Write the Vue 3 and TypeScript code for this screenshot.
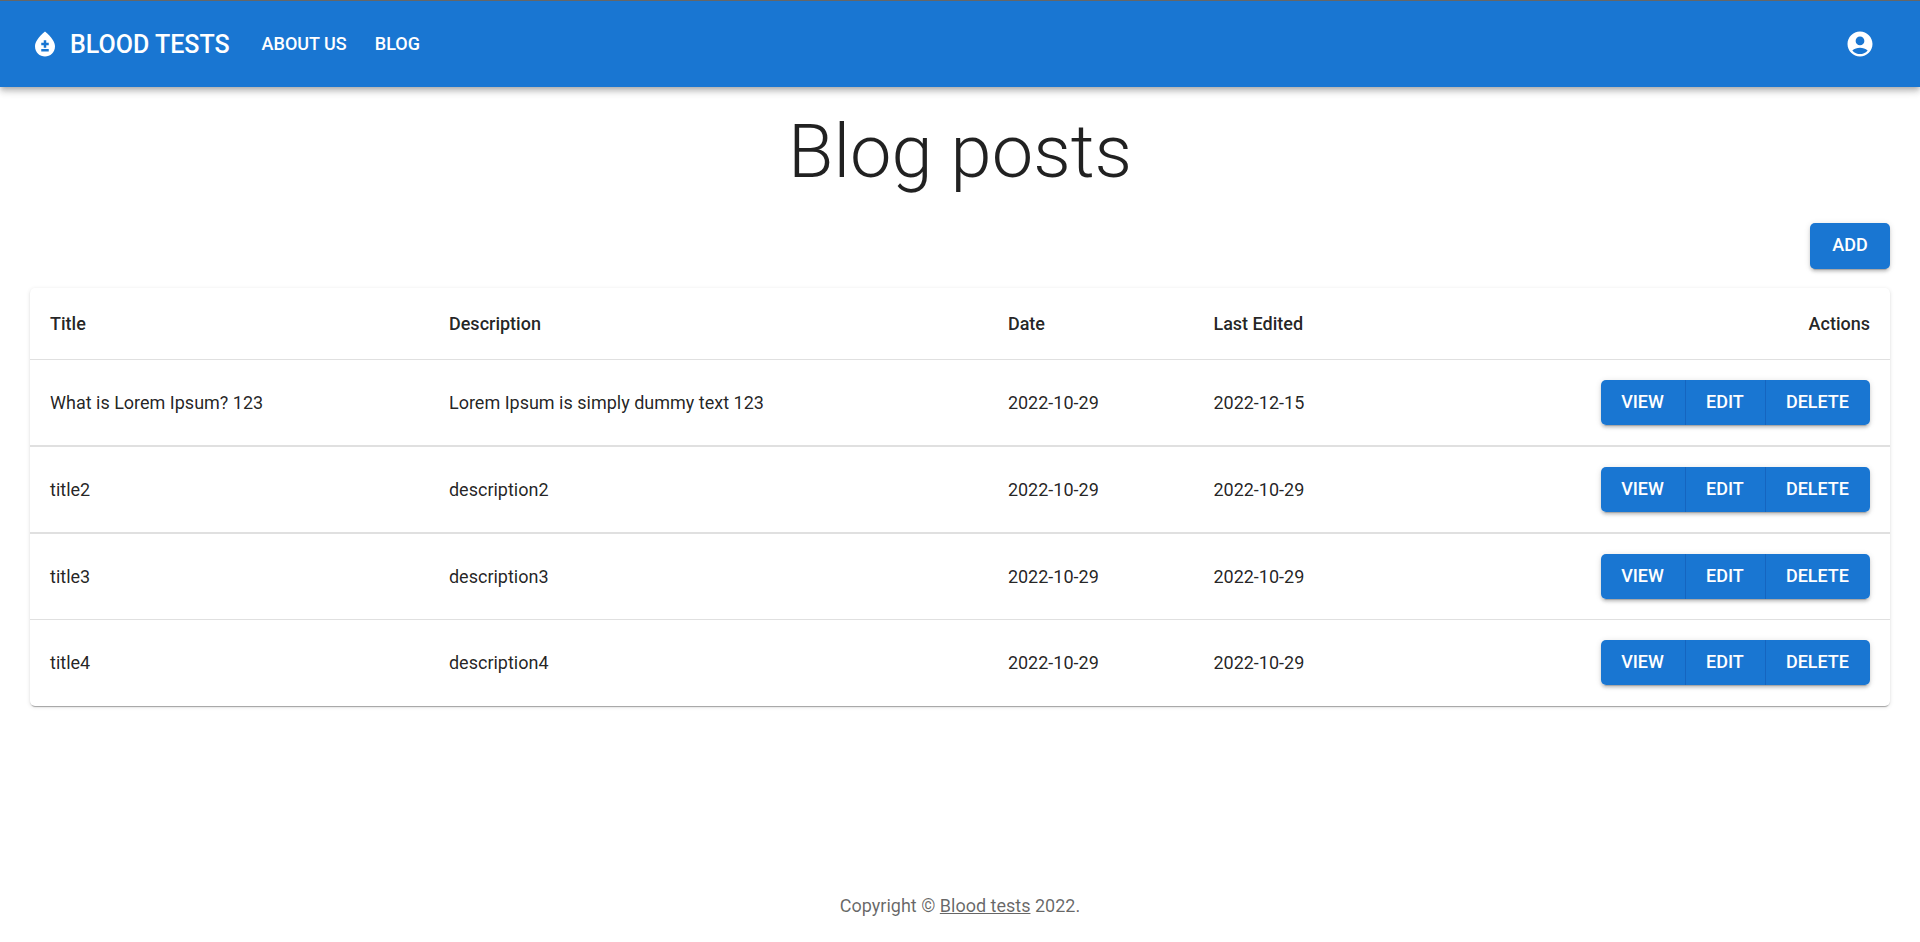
<script setup lang="ts">
interface Post {
  id: number
  title: string
  description: string
  date: string
  edited: string
}

const posts: Post[] = [
  { id: 1, title: 'What is Lorem Ipsum? 123', description: 'Lorem Ipsum is simply dummy text 123', date: '2022-10-29', edited: '2022-12-15' },
  { id: 2, title: 'title2', description: 'description2', date: '2022-10-29', edited: '2022-10-29' },
  { id: 3, title: 'title3', description: 'description3', date: '2022-10-29', edited: '2022-10-29' },
  { id: 4, title: 'title4', description: 'description4', date: '2022-10-29', edited: '2022-10-29' },
]

const actions: string[] = ['View', 'Edit', 'Delete']
</script>

<template>
  <div class="page">
    <header class="bar">
      <a class="brand" href="#">
        <svg class="icon" viewBox="0 0 24 24" aria-hidden="true">
          <path d="M12 2c-5.33 4.55-8 8.48-8 11.8 0 4.98 3.8 8.2 8 8.2s8-3.22 8-8.2c0-3.32-2.67-7.25-8-11.8zm3 16H9v-2h6v2zm0-5h-2v2h-2v-2H9v-2h2V9h2v2h2v2z" />
        </svg>
        <span>Blood tests</span>
      </a>
      <nav class="nav">
        <a href="#">About us</a>
        <a href="#">Blog</a>
      </nav>
      <button class="account" type="button" aria-label="Account">
        <svg class="icon" viewBox="0 0 24 24" aria-hidden="true">
          <path d="M12 2C6.48 2 2 6.48 2 12s4.48 10 10 10 10-4.48 10-10S17.52 2 12 2zm0 4c1.93 0 3.5 1.57 3.5 3.5S13.93 13 12 13s-3.5-1.57-3.5-3.5S10.07 6 12 6zm0 14c-2.03 0-4.43-.82-6.14-2.88C7.55 15.8 9.68 15 12 15s4.45.8 6.14 2.12C16.43 19.18 14.03 20 12 20z" />
        </svg>
      </button>
    </header>

    <main class="content">
      <h1>Blog posts</h1>
      <div class="toolbar">
        <a class="add" href="#">Add</a>
      </div>
      <div class="paper">
        <table>
          <colgroup>
            <col class="col-title" />
            <col class="col-description" />
            <col class="col-date" />
            <col />
          </colgroup>
          <thead>
            <tr>
              <th scope="col">Title</th>
              <th scope="col">Description</th>
              <th scope="col">Date</th>
              <th scope="col">Last Edited</th>
              <th scope="col" class="end">Actions</th>
            </tr>
          </thead>
          <tbody>
            <tr v-for="post in posts" :key="post.id">
              <td>{{ post.title }}</td>
              <td>{{ post.description }}</td>
              <td>{{ post.date }}</td>
              <td>{{ post.edited }}</td>
              <td class="end">
                <div class="group" role="group">
                  <button v-for="action in actions" :key="action" type="button">{{ action }}</button>
                </div>
              </td>
            </tr>
          </tbody>
        </table>
      </div>
    </main>

    <footer class="footer">Copyright © <a href="#">Blood tests</a> 2022.</footer>
  </div>
</template>

<style>
body {
  margin: 0;
  background: #fff;
}
</style>

<style scoped>
.page {
  display: flex;
  flex-direction: column;
  min-height: 100vh;
  box-sizing: border-box;
  font-family: Roboto, "Liberation Sans", sans-serif;
  font-size: 18px;
  line-height: 25px;
  color: rgba(0, 0, 0, 0.87);
}

.bar {
  display: flex;
  align-items: center;
  box-sizing: border-box;
  min-height: 87px;
  padding: 0 30px;
  border-top: 1px solid #666;
  background: #1976d2;
  color: #fff;
  box-shadow: 0 2px 5px -1px rgba(0, 0, 0, 0.2), 0 5px 6px rgba(0, 0, 0, 0.14), 0 1px 12px rgba(0, 0, 0, 0.12);
}

.icon {
  display: block;
  width: 30px;
  height: 30px;
  fill: currentColor;
}

.brand {
  display: flex;
  align-items: center;
  gap: 10px;
  font-size: 25px;
  line-height: 40px;
  font-weight: 500;
  text-transform: uppercase;
  text-decoration: none;
  color: inherit;
}

.brand span {
  padding-top: 2px;
}

.nav {
  display: flex;
  flex: 1;
  gap: 28px;
  margin-left: 32px;
  padding-bottom: 2px;
  font-weight: 500;
  text-transform: uppercase;
}

.nav a {
  color: inherit;
  text-decoration: none;
}

.account {
  padding: 15px;
  border: 0;
  background: none;
  color: inherit;
  cursor: pointer;
}

.content {
  padding: 20px 30px;
}

h1 {
  margin: 0;
  font-size: 74px;
  line-height: 90px;
  font-weight: 300;
  text-align: center;
}

.toolbar {
  display: flex;
  justify-content: flex-end;
  margin: 26px 0 19px;
}

.add,
.group button {
  box-sizing: border-box;
  min-width: 80px;
  font-family: inherit;
  font-size: 18px;
  font-weight: 500;
  text-align: center;
  text-transform: uppercase;
  color: #fff;
  background: #1976d2;
  cursor: pointer;
}

.add,
.group {
  border-radius: 5px;
  box-shadow: 0 4px 1px -3px rgba(0, 0, 0, 0.2), 0 3px 3px rgba(0, 0, 0, 0.14), 0 1px 6px rgba(0, 0, 0, 0.12);
}

.add {
  padding: 9px 20px 12px;
  text-decoration: none;
}

.paper {
  border-radius: 5px;
  background: #fff;
  box-shadow: 0 3px 1px -2px rgba(0, 0, 0, 0.2), 0 1px 1px rgba(0, 0, 0, 0.14), 0 1px 4px rgba(0, 0, 0, 0.12);
}

table {
  width: 100%;
  table-layout: fixed;
  border-collapse: separate;
  border-spacing: 0;
}

.col-title {
  width: 21.45%;
}

.col-description {
  width: 30.05%;
}

.col-date {
  width: 11.05%;
}

th,
td {
  padding: 20px;
  text-align: left;
  font-weight: 400;
  border-bottom: 2px solid #e0e0e0;
}

th {
  padding: 23px 20px;
  font-weight: 500;
  border-bottom-width: 1px;
}

tbody tr:nth-last-child(-n + 2) td {
  border-bottom-width: 1px;
}

tbody tr:last-child td {
  border-bottom-color: transparent;
}

.end {
  text-align: right;
}

.group {
  display: inline-flex;
  vertical-align: top;
}

.group button {
  padding: 9px 21px 11px 20px;
  border: 0;
  line-height: 25px;
}

.group button:not(:last-child) {
  border-right: 1px solid #1565c0;
}

.group button:first-child {
  border-radius: 5px 0 0 5px;
}

.group button:last-child {
  border-radius: 0 5px 5px 0;
}

.footer {
  margin-top: auto;
  padding: 0 30px 24px;
  text-align: center;
  color: rgba(0, 0, 0, 0.6);
}

.footer a {
  color: inherit;
}
</style>
